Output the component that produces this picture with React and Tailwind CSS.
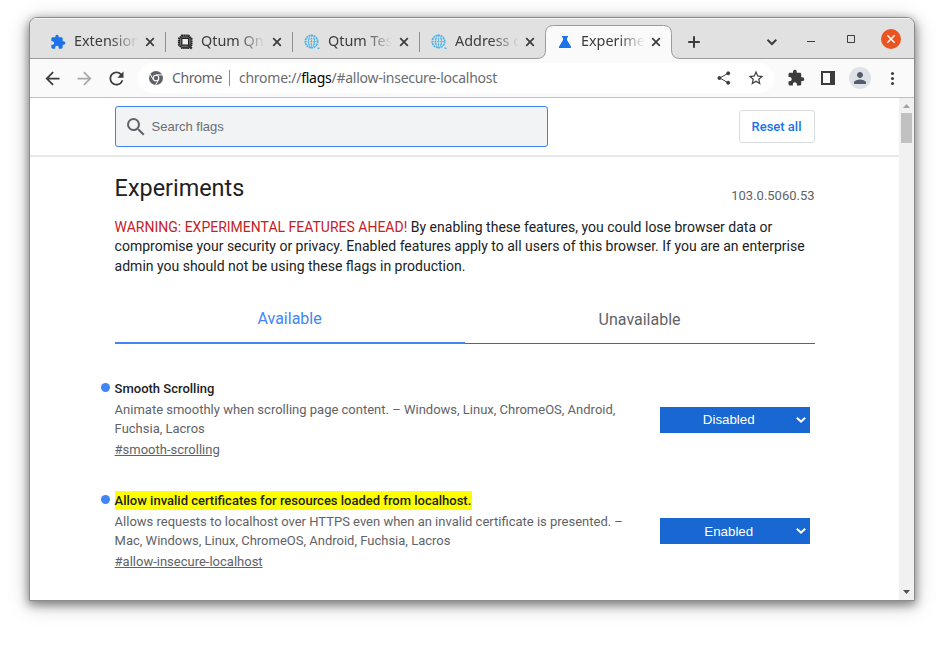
import React from "react";
import { MdExtension, MdArrowBack, MdArrowForward, MdRefresh, MdStarBorder, MdPerson, MdSearch } from "react-icons/md";

const UI = "font-['Noto_Sans',sans-serif]";

function QtumDark() {
  return (
    <svg width="16" height="16" viewBox="0 0 16 16" fill="none">
      <path d="M5 1.5h6.4l3.1 3.1v6.3l-3.1 3.1H5L1.9 10.9V4.6z" fill="#6b6b6b" />
      <path d="M5 1.5h6.4l3.1 3.1v6.3l-3.1 3.1H5L1.9 10.9V4.6z" stroke="#1c1c1c" strokeWidth="2" strokeDasharray="1.5 .6" />
      <path d="M4.8 4.4h6.8v6.8H4.8z" fill="#ededed" stroke="#222" strokeWidth="1.2" />
      <path d="M11.4 11.4l3.4 3.2" stroke="#333" strokeWidth="2.2" />
    </svg>
  );
}

function QtumBlue() {
  return (
    <svg width="16" height="16" viewBox="0 0 16 16" fill="none" stroke="#4fb4e8">
      <circle cx="7.5" cy="7.5" r="6.3" strokeWidth="1.6" strokeDasharray="1.9 .7" />
      <ellipse cx="7.5" cy="7.5" rx="3" ry="6.3" strokeWidth=".9" />
      <path d="M1.5 5h12M1 7.6h13M1.5 10.2h12M7.5 1v13" strokeWidth=".9" strokeDasharray="1.8 .7" />
      <path d="M13.5 13.5h2v1.5h-2z" fill="#4fb4e8" stroke="none" />
    </svg>
  );
}

function Flask() {
  return (
    <svg width="16" height="16" viewBox="0 0 16 16" fill="#1a73e8">
      <path d="M5 2h6v1.5h-1V6l3.9 6.4c.5.9.1 1.6-.8 1.6H2.9c-.9 0-1.3-.7-.8-1.6L6 6V3.5H5z" />
    </svg>
  );
}

function CloseX() {
  return (
    <svg width="10" height="10" viewBox="0 0 10 10" stroke="#3c3c3c" strokeWidth="1.7">
      <path d="M1.2 1.2l7.6 7.6M8.8 1.2L1.2 8.8" />
    </svg>
  );
}

const tabs = [
  { icon: <MdExtension size={16} color="#1a73e8" />, title: "Extensions", sep: true },
  { icon: <QtumDark />, title: "Qtum Qnekt", sep: true },
  { icon: <QtumBlue />, title: "Qtum Testnet", sep: true },
  { icon: <QtumBlue />, title: "Address qQ", sep: false, tight: true },
  { icon: <Flask />, title: "Experiments", sep: false, tight: true },
];

function TabStrip() {
  return (
    <div className="relative flex h-[41px] shrink-0 bg-[#e1e1e1] pl-2">
      <svg className="absolute left-0 top-0" width="884" height="41" viewBox="30 18 884 41" fill="none">
        <path
          d="M30 58.5H537Q545.5 58.5 545.5 50V33.5Q545.5 25.5 553.5 25.5H663.5Q671.5 25.5 671.5 33.5V50Q671.5 58.5 680 58.5H914V60H30Z"
          fill="#fafafa"
          stroke="#9b9b9b"
        />
        <path d="M30 18.5H914" stroke="#f3f3f3" />
      </svg>
      {tabs.map((t) => (
        <div
          key={t.title}
          className={`relative flex h-[41px] shrink-0 items-center pl-3 pt-[7px] ${t.tight ? "w-[126px]" : "w-[127px]"}`}
        >
          <span className="flex w-6 shrink-0">{t.icon}</span>
          <span
            className={`${UI} mb-[2px] w-[64px] shrink-0 overflow-hidden whitespace-nowrap text-[14.4px] leading-5 text-[#3c3c3c] [mask-image:linear-gradient(to_right,black_58%,transparent)]`}
          >
            {t.title}
          </span>
          <span className={`flex ${t.tight ? "ml-[6px]" : "ml-[7px]"}`}>
            <CloseX />
          </span>
          {t.sep && <span className="absolute right-[-1px] top-[14px] h-5 w-px bg-[#8e8e8e]" />}
        </div>
      ))}
      <div className="relative flex grow items-center justify-end">
        <svg width="241" height="41" viewBox="673 18 241 41" fill="none" stroke="#3c3c3c" className="shrink-0">
          <path d="M688.2 42h11.6M694 36.2v11.6" strokeWidth="2" />
          <path d="M767.5 39.8l4.4 4.2 4.4-4.2" strokeWidth="2" />
          <path d="M807 41.5h8" strokeWidth="1" />
          <path d="M847.5 35.5h7v7h-7z" strokeWidth="1" />
          <circle cx="891" cy="39" r="10" fill="#e95420" stroke="none" />
          <path d="M887.3 35.3l7.4 7.4M894.7 35.3l-7.4 7.4" stroke="#fff" strokeWidth="1.4" />
        </svg>
      </div>
    </div>
  );
}

function Toolbar() {
  return (
    <div className="flex h-[39px] shrink-0 items-center border-b border-[#c0c0c0] bg-[#fafafa]">
      <div className="flex w-[108px] shrink-0 items-center gap-3 pl-3">
        <MdArrowBack size={21} color="#3c3c3c" className="-mr-px" />
        <MdArrowForward size={21} color="#a9a9a9" className="-mr-px" />
        <MdRefresh size={21} color="#3c3c3c" />
      </div>
      <div className="flex h-[30px] w-[636px] items-center rounded-full bg-white pl-[11px]">
        <svg width="14" height="14" viewBox="0 0 14 14">
          <circle cx="7" cy="7" r="7" fill="#5f6368" />
          <circle cx="7" cy="7" r="2.8" fill="#5f6368" stroke="#fff" strokeWidth="1.1" />
          <path d="M7 3.9h6.4M4.3 8.6L1.1 3.1M9.7 8.6L6.6 13.9" stroke="#fff" strokeWidth="1" />
        </svg>
        <span className={`${UI} mb-[2px] ml-[9px] w-[57px] text-[14px] tracking-[-0.4px] text-[#5f6368]`}>Chrome</span>
        <span className="h-4 w-px bg-[#8a8d91]" />
        <span className={`${UI} mb-[2px] ml-[9px] whitespace-nowrap text-[14px] tracking-[-0.26px] text-[#6a6d71]`}>
          chrome://<span className="text-black">flags</span>/#allow-insecure-localhost
        </span>
        <span className="ml-auto mr-[9px] flex items-center gap-4">
          <svg width="14" height="14" viewBox="0 0 14 14" fill="#3c3c3c" stroke="#3c3c3c" strokeWidth="1">
            <path d="M11 2.3L2.8 7l8.2 4.7" fill="none" />
            <circle cx="11.2" cy="2.3" r="1.5" />
            <circle cx="2.4" cy="7" r="1.5" />
            <circle cx="11.2" cy="11.7" r="1.5" />
          </svg>
          <MdStarBorder size={18} color="#3c3c3c" />
        </span>
      </div>
      <div className="flex items-center pl-[13px]">
        <MdExtension size={18} color="#3c3c3c" />
        <span className="ml-4 flex h-[14px] w-[14px] justify-start bg-[#3c3c3c] p-[2px]">
          <span className="h-[10px] w-[7px] bg-[#fafafa]" />
        </span>
        <span className="ml-[14px] flex h-[22px] w-[22px] items-center justify-center rounded-full bg-[#dee1e6]">
          <MdPerson size={18} color="#525c6e" />
        </span>
        <span className="ml-5 flex flex-col gap-[2px]">
          <i className="h-[3px] w-[3px] rounded-full bg-[#3c3c3c]" />
          <i className="h-[3px] w-[3px] rounded-full bg-[#3c3c3c]" />
          <i className="h-[3px] w-[3px] rounded-full bg-[#3c3c3c]" />
        </span>
      </div>
    </div>
  );
}

function Flag({ title, lines, link, value, hit }) {
  return (
    <div className="flex h-[112px] text-[13px] leading-[19px] text-[#5f6368]">
      <div className="-ml-[14px] w-[14px] pt-[4px]">
        <div className="h-[9px] w-[9px] rounded-full bg-[#4285f4]" />
      </div>
      <div className="w-[545.4px] whitespace-nowrap">
        <h3 className="mb-[2px] font-medium text-[#202124]">
          <span className={hit ? "inline-block bg-[#ffff00] pr-[0.4px]" : "inline-block"}>{title}</span>
        </h3>
        <p>{lines[0]}</p>
        <p>{lines[1]}</p>
        <a className="mt-[2px] block underline">{link}</a>
      </div>
      <div
        className={`${hit ? "mt-[27px]" : "mt-[28px]"} flex h-[26px] w-[150px] items-center bg-[#1967d2] font-['Liberation_Sans',Arial,sans-serif] text-[13.33px] text-white`}
      >
        <span className={`w-[136px] pl-[1.5px] text-center ${hit ? "pt-px" : ""}`}>{value}</span>
        <svg width="10" height="6" viewBox="0 0 10 6" fill="none" stroke="#fff" strokeWidth="2">
          <path d="M.8.8L5 4.6 9.2.8" />
        </svg>
      </div>
    </div>
  );
}

export default function App() {
  return (
    <div className="h-[657px] w-[943px] overflow-hidden bg-white pl-[29px] pt-[17px] font-[Roboto,sans-serif]">
      <div className="flex h-[584px] w-[886px] flex-col overflow-hidden rounded-t-lg border border-[#8c8c8c] bg-white shadow-[0_3px_10px_1px_rgba(0,0,0,0.42),0_4px_22px_rgba(0,0,0,0.22)]">
        <TabStrip />
        <Toolbar />
        <div className="flex min-h-0 grow">
          <div className="flex w-[869px] flex-col overflow-hidden">
            <div className="flex h-[57px] shrink-0 items-center justify-between pl-[85px] pr-[84px] shadow-[0_2px_1px_rgba(0,0,0,0.09)]">
              <div className="flex h-[41px] w-[433px] items-center rounded-[3px] border border-[#3d83f1] bg-[#f1f3f4] pl-2">
                <MdSearch size={24} color="#5f6368" />
                <span className="ml-[3.5px] font-['Liberation_Sans',Arial,sans-serif] text-[13px] text-[#6b6e73]">Search flags</span>
              </div>
              <div className="flex h-[33px] w-[76px] items-center justify-center rounded-[3px] border border-[#dadce0] pr-px text-[13px] font-medium text-[#1a73e8]">
                Reset all
              </div>
            </div>
            <div className="ml-[84.6px] w-[700px] pt-[18px]">
              <div className="flex h-8 justify-between">
                <h1 className="text-[23.4px] leading-[30px] text-[#202124]">Experiments</h1>
                <span className="pt-[13px] text-[13px] leading-5 text-[#5f6368]">103.0.5060.53</span>
              </div>
              <p className="mt-[12.5px] whitespace-nowrap text-[14px] leading-[19.5px] text-[#202124]">
                <span className="text-[#c5221f]">WARNING: EXPERIMENTAL FEATURES AHEAD!</span> By enabling these features, you could lose browser data or
                <br />
                compromise your security or privacy. Enabled features apply to all users of this browser. If you are an enterprise
                <br />
                admin you should not be using these flags in production.
              </p>
              <div className="mt-[19.5px] flex h-[48px] text-center text-[16px] leading-6">
                <div className="w-1/2 border-b-2 border-[#4285f4] pt-[11px] text-[#4285f4]">Available</div>
                <div className="w-1/2 border-b border-[#5f6368] pt-[12px] text-[#5f6368]">Unavailable</div>
              </div>
              <div className="mt-[35px]">
                <Flag
                  title="Smooth Scrolling"
                  lines={["Animate smoothly when scrolling page content. – Windows, Linux, ChromeOS, Android,", "Fuchsia, Lacros"]}
                  link="#smooth-scrolling"
                  value="Disabled"
                />
                <Flag
                  hit
                  title="Allow invalid certificates for resources loaded from localhost."
                  lines={["Allows requests to localhost over HTTPS even when an invalid certificate is presented. –", "Mac, Windows, Linux, ChromeOS, Android, Fuchsia, Lacros"]}
                  link="#allow-insecure-localhost"
                  value="Enabled"
                />
              </div>
            </div>
          </div>
          <div className="flex w-[15px] flex-col items-center justify-between bg-[#f1f1f1]">
            <div className="flex flex-col items-center">
              <svg className="mt-[6px]" width="7" height="4" viewBox="0 0 7 4" fill="#a3a3a3">
                <path d="M0 4L3.5 0 7 4z" />
              </svg>
              <div className="mt-[5px] h-[30px] w-[11px] bg-[#c1c1c1]" />
            </div>
            <svg className="mb-[6px]" width="7" height="4" viewBox="0 0 7 4" fill="#505050">
              <path d="M0 0h7L3.5 4z" />
            </svg>
          </div>
        </div>
      </div>
    </div>
  );
}
